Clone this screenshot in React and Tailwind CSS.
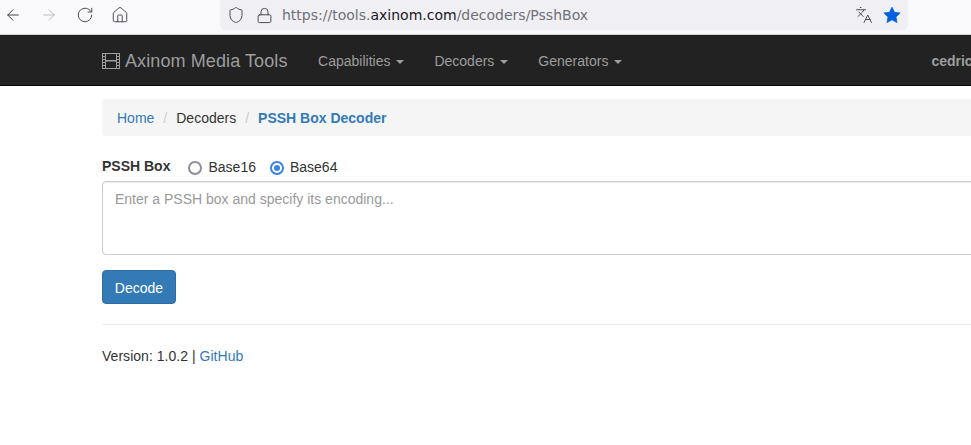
import { ArrowLeft, ArrowRight, RotateCw, House, Shield, Lock, Languages } from 'lucide-react';

function FilmIcon() {
  return (
    <svg width="18" height="16" viewBox="0 0 18 16" className="text-[#9d9d9d] shrink-0" fill="currentColor">
      <path fillRule="evenodd" d="M0 0h18v16H0z M1 1v2h2V1z M4 1v6h10V1z M15 1v2h2V1z M1 4v2h2V4z M15 4v2h2V4z M1 7v2h2V7z M15 7v2h2V7z M4 8.5v6.5h10V8.5z M1 10v2h2v-2z M15 10v2h2v-2z M1 13v2h2v-2z M15 13v2h2v-2z" />
    </svg>
  );
}

function NavItem({ label }) {
  return (
    <div className="flex items-center text-[#9d9d9d] text-sm shrink-0">
      {label}
      <span className="ml-[6px] mt-[2px] w-0 h-0 border-x-4 border-x-transparent border-t-4 border-t-[#9d9d9d]" />
    </div>
  );
}

export default function App() {
  return (
    <div className="w-[971px] h-[445px] overflow-hidden bg-white text-[#333] text-sm font-['Liberation_Sans',sans-serif]">
      {/* browser toolbar */}
      <div className="h-[35px] bg-[#f9f9fb] border-b border-[#d4d4d6] flex items-start">
        <div className="w-[220px] h-[29px] flex items-center pl-[4px] shrink-0">
          <ArrowLeft size={18} strokeWidth={1.3} className="text-[#3f3f46] shrink-0" />
          <ArrowRight size={18} strokeWidth={1.2} className="text-[#b4b4ba] ml-[18px] shrink-0" />
          <RotateCw size={18} strokeWidth={1.3} className="text-[#4a4a52] ml-[18px] shrink-0" />
          <House size={18} strokeWidth={1.3} className="text-[#4a4a52] ml-[17px] shrink-0" />
        </div>
        <div className="w-[688px] h-[30px] bg-[#f0f0f4] rounded-b-[5px] flex items-center pl-[7px] pr-[7px] shrink-0">
          <Shield size={18} strokeWidth={1.3} className="text-[#4a4a52] shrink-0" />
          <Lock size={17} strokeWidth={1.4} className="text-[#4a4a52] ml-[11px] shrink-0" />
          <div className="ml-[9px] text-[14px] text-[#6f6f78] font-['DejaVu_Sans',sans-serif] flex-1">
            https://tools.<span className="text-[#17171c]">axinom.com</span>/decoders/PsshBox
          </div>
          <Languages size={18} strokeWidth={1.3} className="text-[#4a4a52] shrink-0" />
          <svg width="18" height="18" viewBox="0 0 24 24" className="ml-[10px] shrink-0" fill="#0060df">
            <path d="M12 1.5l3.3 6.9 7.5 1-5.5 5.2 1.4 7.5-6.7-3.6-6.7 3.6 1.4-7.5L1.2 9.4l7.5-1z" stroke="#0060df" strokeLinejoin="round" />
          </svg>
        </div>
      </div>

      {/* navbar */}
      <div className="h-[51px] bg-[#222] border-b border-[#080808] flex items-center pl-[102px] pt-[2px] whitespace-nowrap">
        <FilmIcon />
        <span className="ml-[5px] text-lg text-[#9d9d9d] tracking-[0.1px] shrink-0">Axinom Media Tools</span>
        <div className="ml-[30.5px] flex gap-[30px] shrink-0">
          <NavItem label="Capabilities" />
          <NavItem label="Decoders" />
          <NavItem label="Generators" />
        </div>
        <span className="ml-[309px] font-bold text-[#9d9d9d] shrink-0">cedric</span>
      </div>

      {/* content */}
      <div className="pl-[102px] pt-[13px]">
        <div className="h-[37px] w-[1000px] bg-[#f5f5f5] rounded flex items-center px-[15px]">
          <a className="text-[#337ab7]">Home</a>
          <span className="text-[#ccc] px-[9px]">/</span>
          <span>Decoders</span>
          <span className="text-[#ccc] px-[9px]">/</span>
          <a className="text-[#337ab7] font-bold">PSSH Box Decoder</a>
        </div>

        <div className="mt-[20px] flex items-center h-[20px]">
          <span className="font-bold -mt-[1px]">PSSH Box</span>
          <span className="ml-[18px] mt-[3px] w-[14px] h-[14px] rounded-full border-2 border-[#8f8f9d] bg-white" />
          <span className="ml-[6px] mt-[2px]">Base16</span>
          <span className="ml-[14px] mt-[3px] w-[14px] h-[14px] rounded-full border-2 border-[#3b82e6] flex items-center justify-center">
            <span className="w-[6px] h-[6px] rounded-full bg-[#3b82e6]" />
          </span>
          <span className="ml-[6px] mt-[2px]">Base64</span>
        </div>

        <div className="mt-[5px] w-[1000px] h-[74px] bg-white border border-[#ccc] rounded px-[12px] py-[7px] text-[#999] shadow-[inset_0_1px_1px_rgba(0,0,0,0.075)]">
          Enter a PSSH box and specify its encoding...
        </div>

        <button className="block mt-[15px] h-[34px] w-[74px] pt-[1px] bg-[#337ab7] border border-[#2e6da4] rounded text-white">
          Decode
        </button>

        <div className="mt-[20px] border-t border-[#eee] w-[1000px]" />

        <div className="mt-[21px] tracking-[0.03px]">
          Version: 1.0.2 | <a className="text-[#337ab7]">GitHub</a>
        </div>
      </div>
    </div>
  );
}
